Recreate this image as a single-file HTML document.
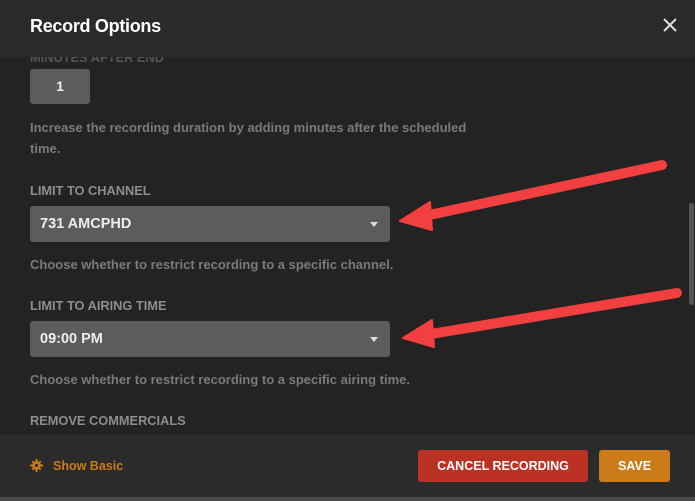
<!DOCTYPE html>
<html><head><style>
*{margin:0;padding:0;box-sizing:border-box}
body{width:695px;height:501px;overflow:hidden;background:#232323;font-family:"Liberation Sans",sans-serif;position:relative}
.hdr{position:absolute;left:0;top:0;width:695px;height:57px;background:#2a2a2a}
.title{position:absolute;left:30px;top:16px;font-size:18px;font-weight:bold;color:#fff;letter-spacing:-0.3px}
.x{position:absolute;left:662px;top:17px}
.lbl{position:absolute;left:30px;font-size:12.8px;font-weight:bold;color:#8e8e8e}
.desc{position:absolute;left:30px;font-size:13px;font-weight:bold;color:#7a7a7a;line-height:21px}
.num{position:absolute;left:30px;top:69px;width:60px;height:35px;background:#5c5c5c;border-radius:3px;color:#eee;font-weight:bold;font-size:14px;text-align:center;line-height:35px}
.sel{position:absolute;left:30px;width:360px;height:36px;background:#5c5c5c;border-radius:3px;color:#eee;font-weight:bold;font-size:14.5px;line-height:36px;padding-left:10px}
.sel:after{content:"";position:absolute;right:12px;top:16px;border-left:4px solid transparent;border-right:4px solid transparent;border-top:5px solid #ddd}
.ftr{position:absolute;left:0;top:435px;width:695px;height:62px;background:#2b2b2b}
.strip{position:absolute;left:0;top:497px;width:695px;height:4px;background:#4a4a4a}
.btn{position:absolute;top:450px;height:32px;border-radius:3px;color:#fff;font-weight:bold;font-size:12.5px;text-align:center;line-height:32px}
</style></head><body>
<div class="lbl" style="top:50px;color:#555">MINUTES AFTER END</div>
<div class="num">1</div>
<div class="desc" style="top:117px">Increase the recording duration by adding minutes after the scheduled<br>time.</div>
<div class="lbl" style="top:183px">LIMIT TO CHANNEL</div>
<div class="sel" style="top:206px">731 AMCPHD</div>
<div class="desc" style="top:254px">Choose whether to restrict recording to a specific channel.</div>
<div class="lbl" style="top:298px">LIMIT TO AIRING TIME</div>
<div class="sel" style="top:321px">09:00 PM</div>
<div class="desc" style="top:369px">Choose whether to restrict recording to a specific airing time.</div>
<div class="lbl" style="top:413px">REMOVE COMMERCIALS</div>
<div class="hdr"><div class="title">Record Options</div>
<svg class="x" width="16" height="16"><path d="M2 2L14 14M14 2L2 14" stroke="#ddd" stroke-width="2"/></svg></div>
<div style="position:absolute;left:689px;top:203px;width:5px;height:102px;background:#555;border-radius:3px"></div>
<svg style="position:absolute;left:0;top:0" width="695" height="501">
<g fill="#f24040" stroke="#f24040" stroke-linecap="round">
<line x1="662" y1="165" x2="420" y2="217" stroke-width="10"/>
<polygon points="400,221 430,202 432,230" stroke-width="2" stroke-linejoin="round"/>
<line x1="677" y1="293" x2="425" y2="335" stroke-width="10"/>
<polygon points="403,338 432,320 434,347" stroke-width="2" stroke-linejoin="round"/>
</g></svg>
<div class="ftr">
<svg style="position:absolute;left:30px;top:24px" width="13" height="13" viewBox="0 0 13 13"><g fill="#cc7b19"><circle cx="6.5" cy="6.5" r="4.2"/><path d="M5.5 0h2v13h-2zM0 5.5h13v2H0z"/><path d="M1.6 3L3 1.6 11.4 10 10 11.4zM10 1.6L11.4 3 3 11.4 1.6 10z"/></g><circle cx="6.5" cy="6.5" r="1.6" fill="#2b2b2b"/></svg>
<div style="position:absolute;left:53px;top:24px;color:#cc7b19;font-size:12.5px;font-weight:bold">Show Basic</div>
</div>
<div class="btn" style="left:418px;width:170px;background:#bb3224">CANCEL RECORDING</div>
<div class="btn" style="left:599px;width:71px;background:#cc7b19">SAVE</div>
<div class="strip"></div>
</body></html>
